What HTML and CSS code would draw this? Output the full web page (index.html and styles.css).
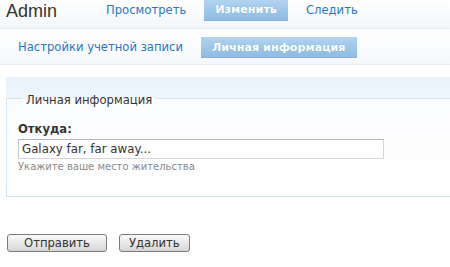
FILE: index.html
```html
<!DOCTYPE html>
<html lang="ru">
<head>
<meta charset="utf-8">
<title>Admin</title>
<link rel="stylesheet" href="styles.css">
</head>
<body>
<div class="header">
  <div class="site-name">Admin</div>
  <ul class="tabs primary">
    <li><a href="#">Просмотреть</a></li>
    <li class="active"><a href="#">Изменить</a></li>
    <li><a href="#">Следить</a></li>
  </ul>
</div>
<div class="subheader">
  <ul class="tabs secondary">
    <li><a href="#">Настройки учетной записи</a></li>
    <li class="active"><a href="#">Личная информация</a></li>
  </ul>
</div>
<form class="form">
  <div class="panel">
    <fieldset class="fieldset">
      <legend class="legend">Личная информация</legend>
      <div class="form-item">
        <label class="label" for="from">Откуда:</label>
        <input class="text-input" id="from" type="text" value="Galaxy far, far away...">
        <div class="description">Укажите ваше место жительства</div>
      </div>
    </fieldset>
  </div>
  <div class="actions">
    <button class="button" type="button">Отправить</button>
    <button class="button button-delete" type="button">Удалить</button>
  </div>
</form>
</body>
</html>
```

FILE: styles.css
```css
html, body {
  margin: 0;
  padding: 0;
  background: #fff;
}
body {
  font-family: "DejaVu Sans", Verdana, sans-serif;
  font-size: 11.6px;
  color: #333;
}
.header {
  height: 28px;
  border-bottom: 1px solid #e6ebf0;
  background: linear-gradient(#ffffff, #f3f7fa);
  display: flex;
  align-items: flex-start;
}
.site-name {
  font-family: "Liberation Sans", Arial, sans-serif;
  font-size: 18px;
  line-height: 23px;
  padding-left: 6px;
  color: #333;
  width: 90px;
}
.tabs {
  list-style: none;
  margin: 0;
  padding: 0;
  display: flex;
  gap: 8px;
}
.tabs li a {
  display: block;
  padding: 0 10px;
  height: 21px;
  line-height: 21px;
  color: #2a78c6;
  text-decoration: none;
  white-space: nowrap;
}
.tabs li.active a {
  color: #fff;
  font-weight: bold;
  font-size: 11.2px;
  padding: 0 11px;
  background: linear-gradient(#b1d3ef, #8dbae2);
  box-shadow: inset 0 -1px 0 #84b2da;
  text-shadow: 0 0 1px #7aa8d2;
}
.primary li a {
  line-height: 20px;
}
.subheader {
  box-sizing: border-box;
  height: 36px;
  border-bottom: 1px solid #e6ebf0;
  background: linear-gradient(#ffffff, #f5f8fb);
  padding-top: 8px;
  padding-left: 8px;
}
.form {
  margin: 12px 0 0 0;
}
.panel {
  margin-left: 6px;
  padding-top: 12px;
  background: linear-gradient(#e9f2fb, #eef5fc) no-repeat;
  background-size: 100% 21px;
}
.fieldset {
  margin: 0;
  padding: 0 0 23px 11px;
  border: 1px solid #d6e4ef;
  border-right: none;
  background: linear-gradient(#fbfcfe, #ffffff);
  min-width: 0;
}
.legend {
  margin-left: 5px;
  padding: 4px 3px 0 3px;
  line-height: 14px;
  color: #333;
}
.form-item {
  padding-top: 15px;
}
.label {
  display: block;
  font-weight: bold;
  line-height: 14px;
  margin-bottom: 3px;
}
.text-input {
  display: block;
  box-sizing: border-box;
  width: 366px;
  height: 20px;
  margin: 0;
  padding: 0 3px;
  font-family: "DejaVu Sans", Verdana, sans-serif;
  font-size: 11.8px;
  color: #333;
  border: 1px solid #d7d7dc;
  border-top-color: #b5b5bd;
  border-left-color: #c8c8ce;
  background: #fff;
  outline: none;
}
.description {
  font-size: 10px;
  line-height: 12px;
  margin-top: 2px;
  color: #8a8a8a;
}
.actions {
  margin: 37px 0 0 7px;
  display: flex;
  gap: 12px;
}
.button {
  height: 18px;
  padding: 0 16px;
  margin: 0;
  font-family: "DejaVu Sans", Verdana, sans-serif;
  font-size: 11.6px;
  line-height: 16px;
  color: #333;
  border: 1px solid #7b7b7b;
  border-radius: 3px;
  background: linear-gradient(#fbfbfb, #e4e4e4 60%, #d6d6d6);
}
.button-delete {
  padding: 0 9px;
}
```
